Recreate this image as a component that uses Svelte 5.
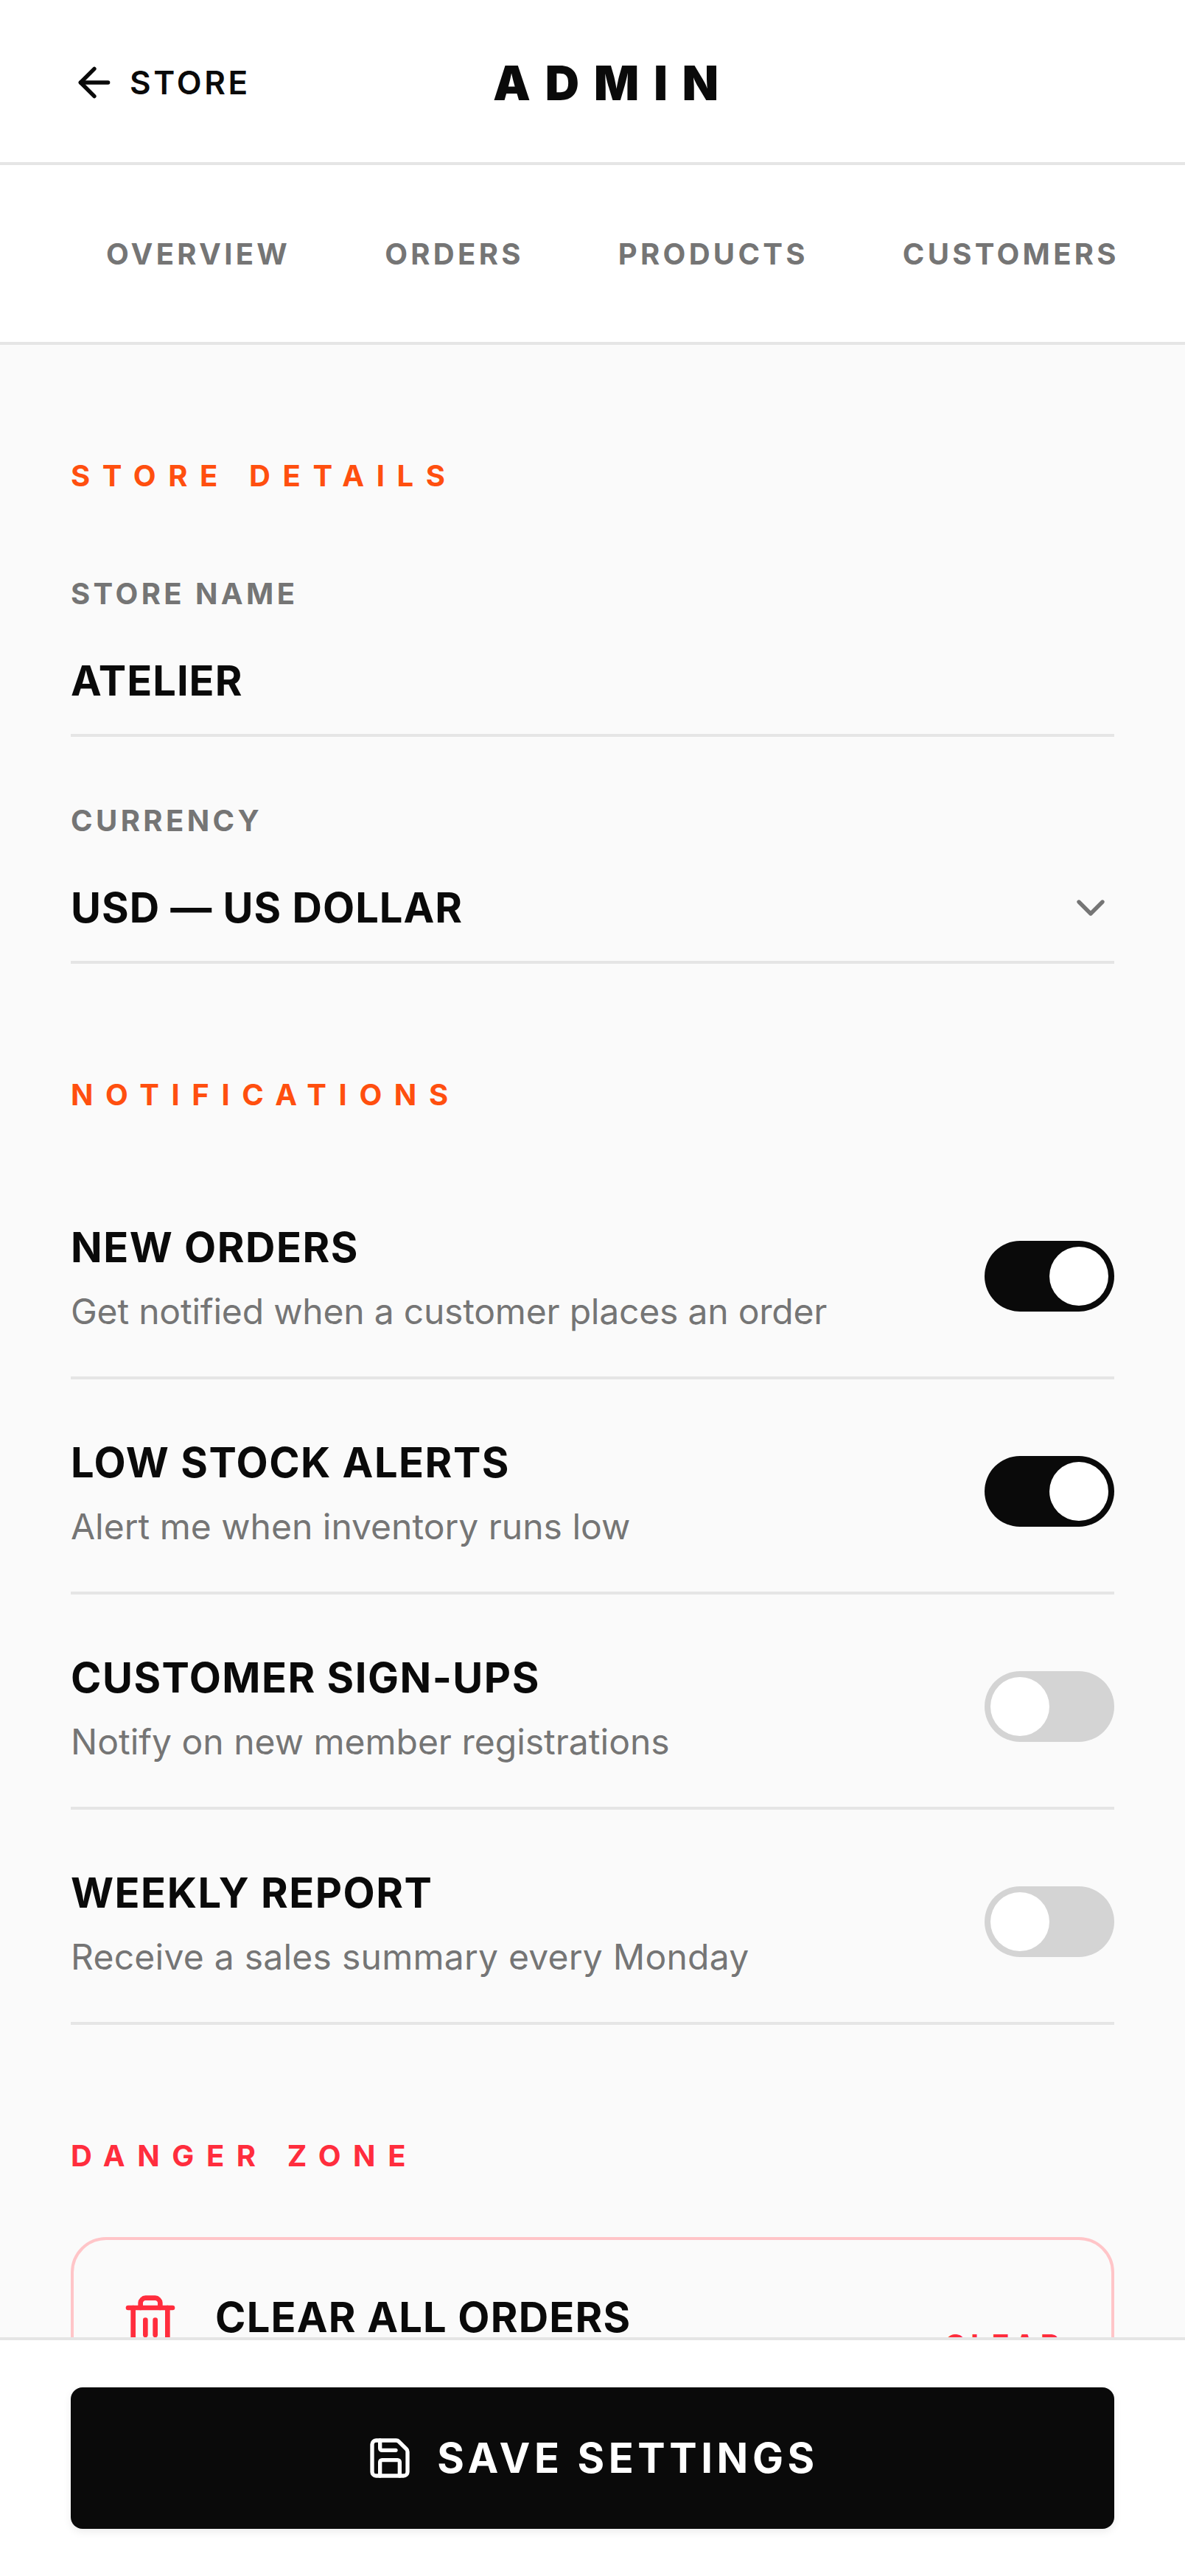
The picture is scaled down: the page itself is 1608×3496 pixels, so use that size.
<script>
	const tabs = ['Overview', 'Orders', 'Products', 'Customers'];

	const notifications = [
		{ title: 'New orders', desc: 'Get notified when a customer places an order', on: true },
		{ title: 'Low stock alerts', desc: 'Alert me when inventory runs low', on: true },
		{ title: 'Customer sign-ups', desc: 'Notify on new member registrations', on: false },
		{ title: 'Weekly report', desc: 'Receive a sales summary every Monday', on: false }
	];
</script>

<div class="page">
	<header class="topbar">
		<a class="back" href="#store">
			<svg class="icon" viewBox="0 0 24 24" width="64" height="64">
				<path d="m12 19-7-7 7-7" />
				<path d="M19 12H5" />
			</svg>
			<span>Store</span>
		</a>
		<h1>Admin</h1>
		<div class="spacer"></div>
	</header>

	<nav class="tabs">
		{#each tabs as tab}
			<a class="tab" href="#{tab.toLowerCase()}">{tab}</a>
		{/each}
	</nav>

	<main class="content">
		<section class="details">
			<h2 class="section-title orange">Store details</h2>
			<div class="field first">
				<span class="label">Store name</span>
				<div class="value">Atelier</div>
			</div>
			<div class="field">
				<span class="label">Currency</span>
				<div class="value select">
					USD — US Dollar
					<svg class="icon chevron" viewBox="0 0 24 24" width="64" height="64">
						<path d="m6 9 6 6 6-6" />
					</svg>
				</div>
			</div>
		</section>

		<section class="notifications">
			<h2 class="section-title orange">Notifications</h2>
			<div class="rows">
				{#each notifications as item}
					<div class="row">
						<div class="row-text">
							<div class="row-title">{item.title}</div>
							<div class="row-desc">{item.desc}</div>
						</div>
						<span class="toggle" class:on={item.on}><span class="knob"></span></span>
					</div>
				{/each}
			</div>
		</section>

		<section class="danger">
			<h2 class="section-title red">Danger zone</h2>
			<div class="danger-card">
				<svg class="icon trash" viewBox="0 0 24 24" width="80" height="80">
					<path d="M3 6h18" />
					<path d="M19 6v14c0 1-1 2-2 2H7c-1 0-2-1-2-2V6" />
					<path d="M8 6V4c0-1 1-2 2-2h4c1 0 2 1 2 2v2" />
					<line x1="10" x2="10" y1="11" y2="17" />
					<line x1="14" x2="14" y1="11" y2="17" />
				</svg>
				<div class="row-text grow">
					<div class="row-title">Clear all orders</div>
					<div class="row-desc">This cannot be undone</div>
				</div>
				<span class="clear">Clear</span>
			</div>
		</section>
	</main>

	<footer class="savebar">
		<button class="save">
			<svg class="icon" viewBox="0 0 24 24" width="64" height="64">
				<path d="M15.2 3a2 2 0 0 1 1.4.6l3.8 3.8a2 2 0 0 1 .6 1.4V19a2 2 0 0 1-2 2H5a2 2 0 0 1-2-2V5a2 2 0 0 1 2-2z" />
				<path d="M17 21v-7a1 1 0 0 0-1-1H8a1 1 0 0 0-1 1v7" />
				<path d="M7 3v4a1 1 0 0 0 1 1h7" />
			</svg>
			<span>Save settings</span>
		</button>
	</footer>
</div>

<style>
	:global(body) {
		margin: 0;
		background: #fafafa;
	}

	.page {
		display: flex;
		flex-direction: column;
		height: 3496px;
		overflow: hidden;
		font-family: Inter, 'Liberation Sans', sans-serif;
		color: #0a0a0a;
		background: #fafafa;
		will-change: opacity;
	}

	.icon {
		fill: none;
		stroke: currentColor;
		stroke-width: 2;
		stroke-linecap: round;
		stroke-linejoin: round;
		flex: none;
	}

	.topbar {
		flex: none;
		box-sizing: border-box;
		height: 224px;
		display: flex;
		align-items: center;
		justify-content: space-between;
		padding: 4px 96px 0;
		background: #fff;
		border-bottom: 4px solid #e5e5e5;
	}

	.spacer {
		width: 188px;
	}

	.back {
		display: flex;
		align-items: center;
		gap: 16px;
		color: inherit;
		text-decoration: none;
		font-size: 44px;
		font-weight: 600;
		letter-spacing: 3.7px;
		text-transform: uppercase;
	}

	h1 {
		margin: 0;
		font-size: 64px;
		font-weight: 900;
		letter-spacing: 20px;
		text-transform: uppercase;
	}

	.tabs {
		flex: none;
		box-sizing: border-box;
		height: 244px;
		display: flex;
		align-items: center;
		padding-left: 80px;
		background: #fff;
		border-bottom: 4px solid #e5e5e5;
		white-space: nowrap;
	}

	.tab {
		padding: 0 64px;
		color: #757575;
		text-decoration: none;
		font-size: 40px;
		font-weight: 700;
		letter-spacing: 4.3px;
		text-transform: uppercase;
	}

	.content {
		flex: 1;
		min-height: 0;
		overflow: hidden;
		padding: 0 96px;
	}

	.section-title {
		margin: 0;
		font-size: 40px;
		line-height: 48px;
		font-weight: 700;
		letter-spacing: 16.6px;
		text-transform: uppercase;
	}

	.orange {
		color: #ff4f0f;
	}

	.red {
		color: #ff2d3d;
	}

	.details {
		padding-top: 154px;
		padding-bottom: 24px;
	}

	.field {
		margin-top: 90px;
		border-bottom: 4px solid #e5e5e5;
	}

	.field.first {
		margin-top: 112px;
	}

	.label {
		display: block;
		margin-bottom: 22px;
		font-size: 40px;
		line-height: 48px;
		font-weight: 700;
		letter-spacing: 4.4px;
		color: #757575;
		text-transform: uppercase;
	}

	.value {
		display: flex;
		align-items: center;
		justify-content: space-between;
		height: 144px;
		font-size: 56px;
		font-weight: 700;
		letter-spacing: 1px;
		text-transform: uppercase;
	}

	.chevron {
		color: #757575;
	}

	.notifications {
		padding-top: 130px;
	}

	.rows {
		margin-top: 70px;
	}

	.row {
		display: flex;
		align-items: center;
		justify-content: space-between;
		box-sizing: border-box;
		height: 292px;
		padding-top: 16px;
		border-bottom: 4px solid #e5e5e5;
	}

	.row-title {
		font-size: 56px;
		line-height: 72px;
		font-weight: 700;
		letter-spacing: 1.5px;
		text-transform: uppercase;
	}

	.row-desc {
		margin-top: 24px;
		font-size: 48px;
		line-height: 54px;
		color: #757575;
	}

	.row:first-child .row-desc {
		letter-spacing: -0.2px;
	}

	.row:last-child .row-desc {
		letter-spacing: 0.25px;
	}

	.toggle {
		box-sizing: border-box;
		display: flex;
		width: 176px;
		height: 96px;
		padding: 8px;
		border-radius: 48px;
		background: #d4d4d4;
		justify-content: flex-start;
	}

	.toggle.on {
		background: #0a0a0a;
		justify-content: flex-end;
	}

	.knob {
		width: 80px;
		height: 80px;
		border-radius: 50%;
		background: #fff;
	}

	.danger {
		padding-top: 154px;
	}

	.danger-card {
		display: flex;
		align-items: flex-start;
		gap: 48px;
		margin-top: 86px;
		padding: 64px;
		border: 4px solid #ffc5c8;
		border-radius: 48px;
	}

	.trash {
		margin-top: 8px;
		color: #ff2d3d;
	}

	.grow {
		flex: 1;
		padding: 5px 0 2px;
	}

	.grow .row-title {
		letter-spacing: 1.2px;
	}

	.clear {
		align-self: center;
		color: #ff2d3d;
		font-size: 40px;
		font-weight: 700;
		letter-spacing: 6px;
		text-transform: uppercase;
	}

	.savebar {
		flex: none;
		box-sizing: border-box;
		height: 324px;
		padding: 64px 96px;
		background: #fff;
		border-top: 4px solid #e5e5e5;
	}

	.save {
		display: flex;
		align-items: center;
		justify-content: center;
		gap: 32px;
		width: 100%;
		height: 192px;
		border: 0;
		border-radius: 16px;
		background: #0a0a0a;
		color: #fff;
		font-family: inherit;
		font-size: 56px;
		font-weight: 700;
		letter-spacing: 5.6px;
		text-transform: uppercase;
		box-shadow: 0 4px 12px rgba(0, 0, 0, 0.08);
	}
</style>
